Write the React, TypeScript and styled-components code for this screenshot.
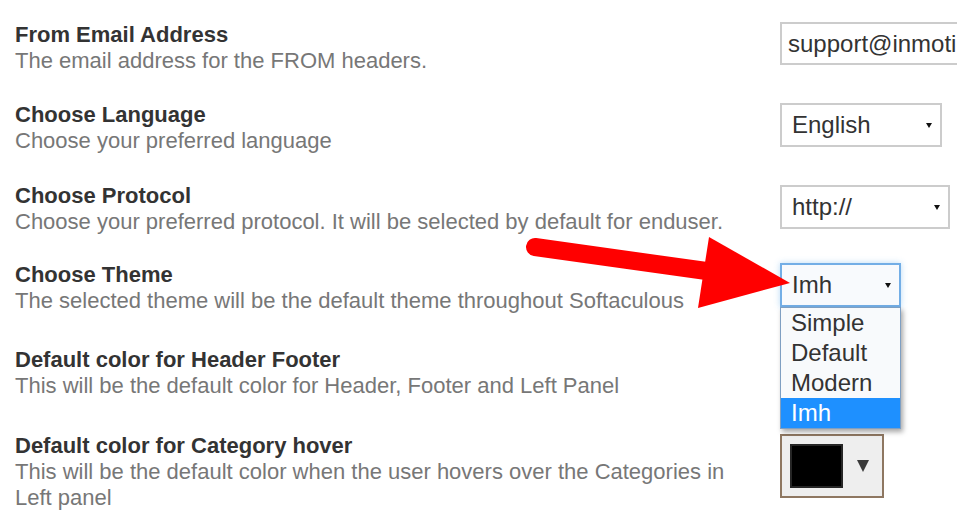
import React from "react";
import styled, { createGlobalStyle } from "styled-components";

const Global = createGlobalStyle`
  html, body { margin: 0; padding: 0; background: #fff; overflow: hidden; }
  body { font-family: "Liberation Sans", Arial, sans-serif; }
`;

const Page = styled.div`
  position: relative;
  width: 957px;
  height: 532px;
  overflow: hidden;
  padding: 22px 0 0 15px;
  box-sizing: border-box;
`;

const List = styled.div`
  display: flex;
  flex-direction: column;
`;

const Row = styled.div<{ $h: number }>`
  display: grid;
  grid-template-columns: 740px auto;
  column-gap: 25px;
  align-items: start;
  min-height: ${(p) => p.$h}px;
`;

const Info = styled.div`
  display: flex;
  flex-direction: column;
  font-size: 22px;
  line-height: 26px;
`;

const Title = styled.div`
  font-weight: bold;
  color: #333333;
`;

const Desc = styled.div`
  color: #777777;
`;

const Control = styled.div<{ $dy?: number }>`
  position: relative;
  margin-top: ${(p) => p.$dy ?? 0}px;
`;

const TextInput = styled.div`
  width: 200px;
  height: 43px;
  box-sizing: border-box;
  border: 2px solid #cccccc;
  border-right: none;
  padding: 0 0 0 6px;
  display: flex;
  align-items: center;
  font-size: 24px;
  color: #333;
  white-space: nowrap;
  overflow: hidden;
`;

const Select = styled.div<{ $w: number; $focus?: boolean }>`
  width: ${(p) => p.$w}px;
  height: 44px;
  box-sizing: border-box;
  border: 2px solid ${(p) => (p.$focus ? "#73aee6" : "#cccccc")};
  background: ${(p) => (p.$focus ? "#f8fafd" : "#ffffff")};
  box-shadow: ${(p) => (p.$focus ? "0 0 6px rgba(102,175,233,0.45)" : "none")};
  display: flex;
  align-items: center;
  justify-content: space-between;
  padding: 0 8px 0 10px;
  font-size: 24px;
  color: #333;
`;

const Caret = styled.span`
  width: 0;
  height: 0;
  border-left: 3px solid transparent;
  border-right: 3px solid transparent;
  border-top: 5px solid #111;
  margin-top: 1px;
`;

const Dropdown = styled.div`
  position: absolute;
  left: 0;
  top: 44px;
  width: 121px;
  box-sizing: border-box;
  background: #f8fafc;
  border: 1px solid #7f9fc2;
  box-shadow: 2px 3px 5px rgba(0, 0, 0, 0.35);
  z-index: 5;
  display: flex;
  flex-direction: column;
`;

const Option = styled.div<{ $active?: boolean }>`
  height: 30px;
  line-height: 30px;
  padding-left: 10px;
  font-size: 24px;
  color: ${(p) => (p.$active ? "#ffffff" : "#333333")};
  background: ${(p) => (p.$active ? "#1e90ff" : "transparent")};
`;

const ColorPicker = styled.div`
  width: 104px;
  height: 64px;
  box-sizing: border-box;
  border: 2px solid #8e7761;
  background: #eeeeee;
  display: flex;
  align-items: center;
  padding: 0 0 0 8px;
  gap: 14px;
`;

const Swatch = styled.div`
  width: 53px;
  height: 44px;
  box-sizing: border-box;
  background: #000;
  border: 2px solid #262626;
`;

const BigCaret = styled.span`
  width: 0;
  height: 0;
  border-left: 6px solid transparent;
  border-right: 6px solid transparent;
  border-top: 12px solid #3a3a3a;
`;

const Arrow = styled.svg`
  position: absolute;
  left: 0;
  top: 0;
  pointer-events: none;
  z-index: 10;
`;

export default function App() {
  return (
    <>
      <Global />
      <Page>
        <List>
          <Row $h={80}>
            <Info>
              <Title>From Email Address</Title>
              <Desc>The email address for the FROM headers.</Desc>
            </Info>
            <Control>
              <TextInput>support@inmotionhosting.com</TextInput>
            </Control>
          </Row>
          <Row $h={81}>
            <Info>
              <Title>Choose Language</Title>
              <Desc>Choose your preferred language</Desc>
            </Info>
            <Control $dy={1}>
              <Select $w={162}>
                English
                <Caret />
              </Select>
            </Control>
          </Row>
          <Row $h={79}>
            <Info>
              <Title>Choose Protocol</Title>
              <Desc>
                Choose your preferred protocol. It will be selected by default for enduser.
              </Desc>
            </Info>
            <Control $dy={2}>
              <Select $w={170}>
                http://
                <Caret />
              </Select>
            </Control>
          </Row>
          <Row $h={85}>
            <Info>
              <Title>Choose Theme</Title>
              <Desc>The selected theme will be the default theme throughout Softaculous</Desc>
            </Info>
            <Control $dy={1}>
              <Select $w={121} $focus>
                Imh
                <Caret />
              </Select>
              <Dropdown>
                <Option>Simple</Option>
                <Option>Default</Option>
                <Option>Modern</Option>
                <Option $active>Imh</Option>
              </Dropdown>
            </Control>
          </Row>
          <Row $h={86}>
            <Info>
              <Title>Default color for Header Footer</Title>
              <Desc>This will be the default color for Header, Footer and Left Panel</Desc>
            </Info>
            <Control $dy={1}>
              <ColorPicker>
                <Swatch />
                <BigCaret />
              </ColorPicker>
            </Control>
          </Row>
          <Row $h={80}>
            <Info>
              <Title>Default color for Category hover</Title>
              <Desc>
                This will be the default color when the user hovers over the Categories in Left
                panel
              </Desc>
            </Info>
            <Control $dy={1}>
              <ColorPicker>
                <Swatch />
                <BigCaret />
              </ColorPicker>
            </Control>
          </Row>
        </List>
        <Arrow width="957" height="532" viewBox="0 0 957 532">
          <line
            x1="535"
            y1="247"
            x2="728"
            y2="274"
            stroke="#ff0000"
            strokeWidth="18"
            strokeLinecap="round"
          />
          <polygon points="709,237 790,283 698,308" fill="#ff0000" />
        </Arrow>
      </Page>
    </>
  );
}
